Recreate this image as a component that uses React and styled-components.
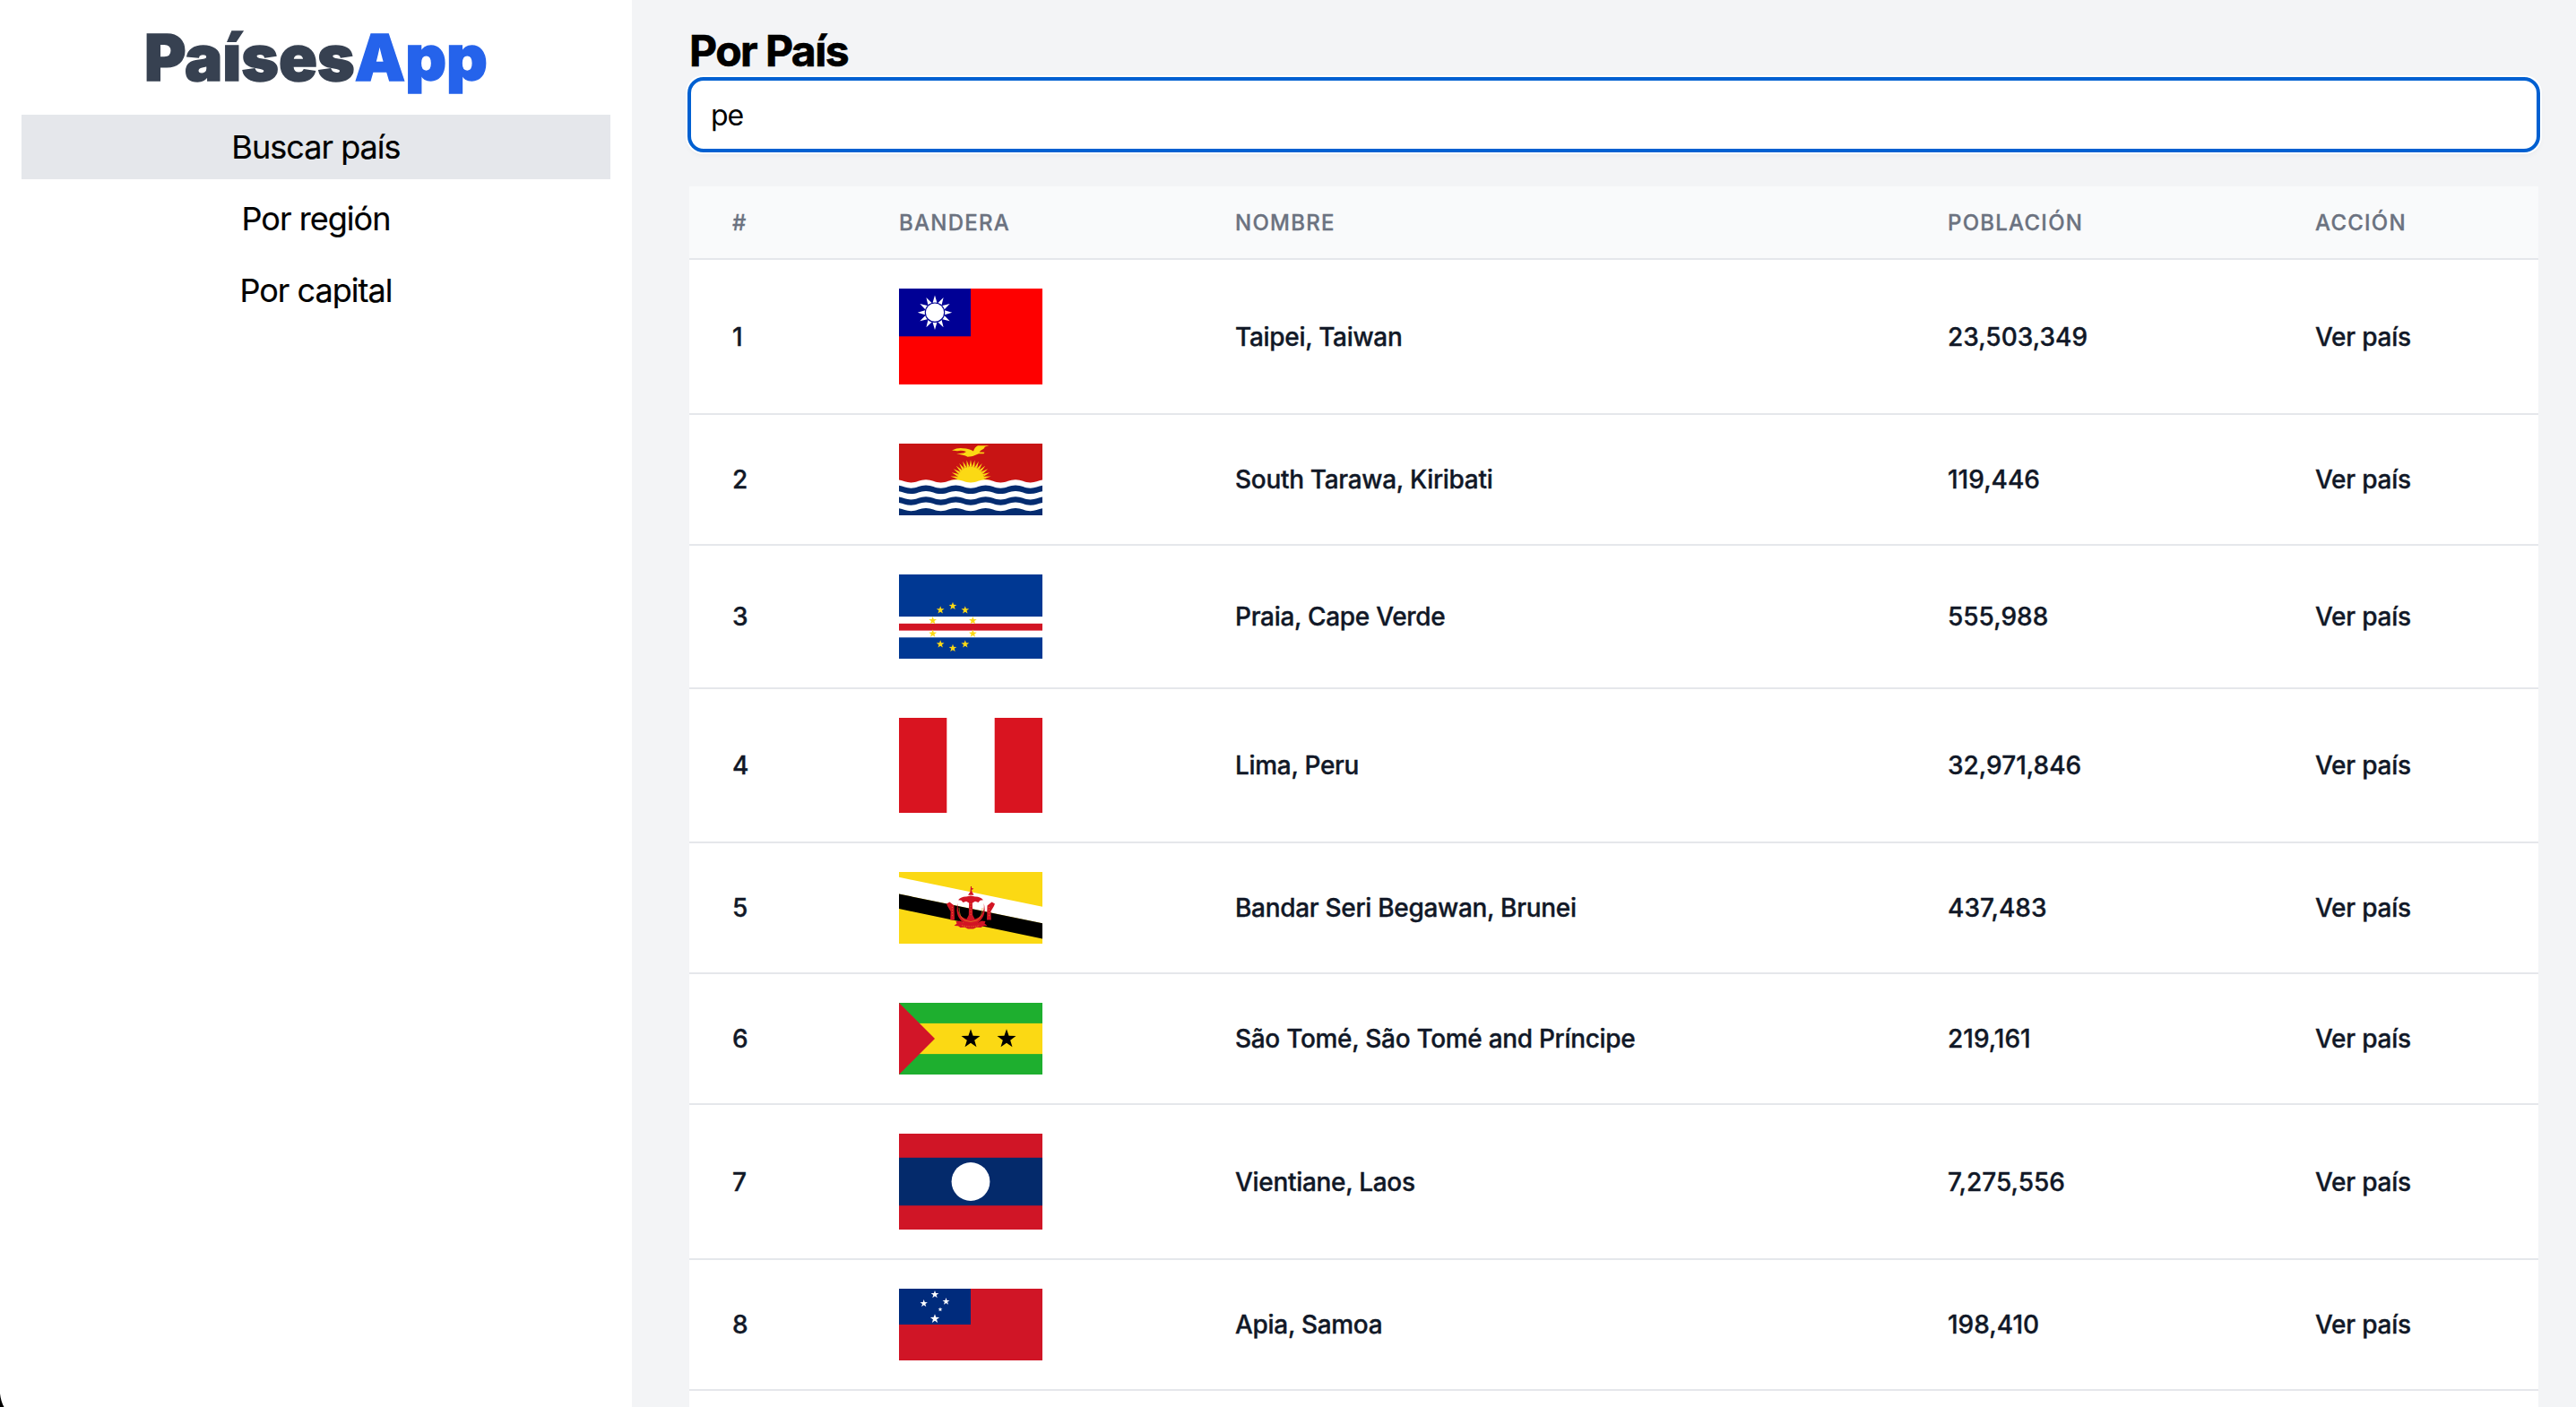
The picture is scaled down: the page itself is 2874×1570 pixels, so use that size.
import React from "react";
import styled, { createGlobalStyle } from "styled-components";

const GlobalStyle = createGlobalStyle`
  *, *::before, *::after { box-sizing: border-box; }
  body {
    margin: 0;
    overflow: hidden;
    color: #000;
    background: #f3f4f6;
    font-family: Inter, "Liberation Sans", sans-serif;
    -webkit-font-smoothing: antialiased;
  }
`;

const Page = styled.div`
  position: relative;
  display: flex;
  height: 1570px;
  overflow: hidden;
`;

const Sidebar = styled.aside`
  flex: 0 0 705px;
  padding: 24px;
  background: #fff;
  text-align: center;
`;

const Logo = styled.h1`
  margin: 0 0 16px;
  height: 88px;
  font-size: 71px;
  line-height: 80px;
  font-weight: 900;
  letter-spacing: 0;
  color: #374151;
  -webkit-text-stroke: 1.4px currentColor;
`;

const LogoAccent = styled.span`
  color: #2563eb;
`;

const Menu = styled.ul`
  display: flex;
  flex-direction: column;
  gap: 8px;
  margin: 0;
  padding: 0;
  list-style: none;
`;

const MenuItem = styled.li`
  height: 72px;
  font-size: 36px;
  line-height: 72px;
  letter-spacing: -0.027em;
  background: ${(p) => (p.$active ? "#e5e7eb" : "transparent")};
  -webkit-text-stroke: 0.2px currentColor;
`;

const Main = styled.main`
  flex: 1;
  min-width: 0;
  padding: 24px 42px 0 64px;
`;

const Title = styled.h2`
  margin: 0;
  height: 64px;
  font-size: 48px;
  line-height: 66px;
  font-weight: 700;
  letter-spacing: -0.032em;
  -webkit-text-stroke: 0.7px currentColor;
`;

const SearchInput = styled.input`
  display: block;
  width: 100%;
  height: 80px;
  margin-bottom: 40px;
  padding: 0 24px;
  border: 0;
  border-radius: 16px;
  outline: 4px solid #0060d1;
  outline-offset: -2px;
  box-shadow: 0 0 0 4px #fff, 0 3px 6px 2px rgba(0, 0, 0, 0.05);
  background: #fff;
  color: #000;
  font-family: inherit;
  font-size: 32px;
  letter-spacing: -0.035em;
`;

const Table = styled.table`
  width: 2063px;
  table-layout: fixed;
  border-spacing: 0;
  background: #fff;
`;

const Col = styled.col`
  width: ${(p) => p.$w}px;
`;

const HeadCell = styled.th`
  height: 80px;
  padding: 2px 48px 0;
  background: #f9fafb;
  color: #6b7280;
  font-size: 24px;
  line-height: 32px;
  font-weight: 500;
  letter-spacing: 0.052em;
  text-align: left;
  text-transform: uppercase;
  -webkit-text-stroke: 0.3px currentColor;
`;

const Cell = styled.td`
  padding: 32px 48px;
  border-top: 2px solid #e5e7eb;
  color: #111827;
  font-size: 28px;
  line-height: 40px;
  font-weight: 500;
  letter-spacing: ${(p) => p.$tracking || "normal"};
  white-space: nowrap;
  vertical-align: middle;
  -webkit-text-stroke: 0.35px currentColor;
`;

const FlagImage = styled.svg`
  display: block;
  width: 160px;
  height: ${(p) => p.$h}px;
`;

const WindowCorner = styled.svg`
  position: absolute;
  left: 0;
  bottom: 0;
  width: 6px;
  height: 18px;
`;

const starPoints = (cx, cy, outer, inner, n = 5) =>
  Array.from({ length: n * 2 }, (_, i) => {
    const r = i % 2 ? inner : outer;
    const a = (Math.PI * i) / n - Math.PI / 2;
    return `${(cx + r * Math.cos(a)).toFixed(2)},${(cy + r * Math.sin(a)).toFixed(2)}`;
  }).join(" ");

const Star = ({ x, y, r, fill }) => (
  <polygon points={starPoints(x, y, r, r * 0.4)} fill={fill} />
);

const Taiwan = () => (
  <>
    <rect width="160" height="107" fill="#fe0000" />
    <rect width="80" height="53.3" fill="#000095" />
    <polygon points={starPoints(40, 26.7, 19.2, 10.4, 12)} fill="#fff" />
    <circle cx="40" cy="26.7" r="11.3" fill="#000095" />
    <circle cx="40" cy="26.7" r="10.1" fill="#fff" />
  </>
);

const wave = (y) => {
  const half = 50 / 3;
  let d = `M ${80 - half * 6} ${y + 3.2}`;
  for (let i = 0; i < 12; i += 1) {
    const x = 80 + half * (i - 6);
    const from = i % 2 ? y : y + 3.2;
    const to = i % 2 ? y + 3.2 : y;
    d += ` C ${x + 6.5} ${from} ${x + half - 6.5} ${to} ${x + half} ${to}`;
  }
  return d;
};

const waveFill = (y) => `${wave(y)} L 180 90 L -20 90 Z`;

const Kiribati = () => (
  <>
    <rect width="160" height="80" fill="#c81414" />
    <polygon points={starPoints(80, 41, 23, 15, 32)} fill="#fbd914" />
    <circle cx="80" cy="41" r="15.4" fill="none" stroke="#d9861a" strokeWidth="0.7" strokeDasharray="1.5 1.5" />
    <path
      d="M59 7.4 Q66 4.4 71 5.2 Q79 5.6 83 8.4 Q84.5 3.5 88 2.2 L100.5 2.3 L96 3.6 L94.5 5.8 Q91 7.5 89.5 9.5 L95.5 9.8 L94.5 11.2 L89 11.3 Q83 14.6 76.5 14.7 Q72 12.2 64 11.5 L72.5 10.6 L75 9 Q70 6.9 65 8.2 Z"
      fill="#fbd914"
    />
    {[40.3, 46.5, 52.9, 59.2, 65.6, 72].map((y, i) => (
      <path key={y} d={waveFill(y)} fill={i % 2 ? "#042c70" : "#fff"} />
    ))}
  </>
);

const CapeVerde = () => (
  <>
    <rect width="160" height="94" fill="#003893" />
    <rect y="47" width="160" height="23.3" fill="#fff" />
    <rect y="54.8" width="160" height="7.8" fill="#d21524" />
    {Array.from({ length: 10 }, (_, i) => {
      const a = (Math.PI * i) / 5 - Math.PI / 2;
      return (
        <Star key={i} x={60 + 23.5 * Math.cos(a)} y={58.8 + 23.5 * Math.sin(a)} r={4.6} fill="#fbd914" />
      );
    })}
  </>
);

const Peru = () => (
  <>
    <rect width="160" height="106" fill="#fff" />
    <rect width="53.3" height="106" fill="#d91420" />
    <rect x="106.7" width="53.3" height="106" fill="#d91420" />
  </>
);

const Hand = () => (
  <path d="M53 35.5 L56.5 33.6 L59 35.5 L61.5 37.5 L62 53.5 L57.2 53.5 L57.6 44 L54.2 38.2 Z" />
);

const Brunei = () => (
  <>
    <rect width="160" height="80" fill="#fbd914" />
    <polygon points="0,5.8 160,38.8 160,57.2 0,24.5" fill="#fff" />
    <polygon points="0,24.5 160,57.2 160,74.5 0,41" fill="#000" />
    <g fill="#d21524">
      <path d="M80 16 L81 16 L81 17.8 L83.5 18.8 L81 20 L81.5 22 L83.5 25.8 L77 25.8 L79.5 22 Z" />
      <path d="M66 31.2 Q70 27.2 75 27.6 L80 26.5 L85 27.6 Q90 27.2 94 31.2 L90.5 31.8 L88.5 34 L85 32.8 L82 34.5 L80 35.5 L78 34.5 L75 32.8 L71.5 34 L69.5 31.8 Z" />
      <path d="M78.2 33 L81.8 33 L82.2 48 L85 53.5 L75 53.5 L77.8 48 Z" />
      <path d="M66 34.5 Q62 46 69 54 Q74 60 80 60 Q86 60 91 54 Q98 46 94.5 34.5 Q96 44 90.5 49.5 Q86 53 80 53 Q74 53 69.5 49.5 Q64.5 44 66 34.5 Z" />
      <Hand />
      <g transform="translate(160 0) scale(-1 1)">
        <Hand />
      </g>
      <path d="M61.5 60 L64.5 57.5 L63.5 55 L68 54.5 L72.5 57 L80 58.5 L87.5 57 L92 54.5 L96.5 55 L95.5 57.5 L98.5 60 L94 60.2 L91.5 62 L86.5 61.8 L83 63.6 L77 63.6 L73.5 61.8 L68.5 62 L66 60.2 Z" />
    </g>
    <g fill="none" stroke="#f0a01e" strokeWidth="0.6">
      <path d="M67 40 Q67 50 73 54 Q80 57 87 54 Q93 50 93 40" />
      <path d="M70 59.5 Q80 62.5 90 59.5" strokeDasharray="1.5 1" />
      <path d="M80 35 V50 M59.5 39 V51 M100.5 39 V51" strokeDasharray="1 2" />
    </g>
  </>
);

const SaoTome = () => (
  <>
    <rect width="160" height="80" fill="#1eaf2f" />
    <rect y="22.9" width="160" height="34.2" fill="#fbd914" />
    <polygon points="0,0 40,40 0,80" fill="#d21528" />
    <Star x={80} y={40.3} r={11} fill="#000" />
    <Star x={120} y={40.3} r={11} fill="#000" />
  </>
);

const Laos = () => (
  <>
    <rect width="160" height="107" fill="#d01526" />
    <rect y="26.8" width="160" height="53.4" fill="#042a6b" />
    <circle cx="80" cy="53.5" r="21.4" fill="#fff" />
  </>
);

const Samoa = () => (
  <>
    <rect width="160" height="80" fill="#d01526" />
    <rect width="80" height="40" fill="#002b7c" />
    <Star x={40} y={6.5} r={4.6} fill="#fff" />
    <Star x={52.5} y={14.3} r={4.2} fill="#fff" />
    <Star x={27.7} y={16.5} r={4.4} fill="#fff" />
    <Star x={46} y={23.2} r={2.6} fill="#fff" />
    <Star x={40} y={33.6} r={5.4} fill="#fff" />
  </>
);

const countries = [
  { name: "Taipei, Taiwan", population: "23,503,349", height: 107, Flag: Taiwan },
  { name: "South Tarawa, Kiribati", population: "119,446", height: 80, Flag: Kiribati },
  { name: "Praia, Cape Verde", population: "555,988", height: 94, Flag: CapeVerde },
  { name: "Lima, Peru", population: "32,971,846", height: 106, Flag: Peru },
  { name: "Bandar Seri Begawan, Brunei", population: "437,483", height: 80, Flag: Brunei },
  { name: "São Tomé, São Tomé and Príncipe", population: "219,161", height: 80, Flag: SaoTome },
  { name: "Vientiane, Laos", population: "7,275,556", height: 107, Flag: Laos },
  { name: "Apia, Samoa", population: "198,410", height: 80, Flag: Samoa },
];

const columns = [
  { label: "#", width: 186 },
  { label: "Bandera", width: 375 },
  { label: "Nombre", width: 795 },
  { label: "Población", width: 410 },
  { label: "Acción", width: 297 },
];

export default function App() {
  return (
    <>
      <GlobalStyle />
      <Page>
        <Sidebar>
          <Logo>
            Países<LogoAccent>App</LogoAccent>
          </Logo>
          <Menu>
            <MenuItem $active>Buscar país</MenuItem>
            <MenuItem>Por región</MenuItem>
            <MenuItem>Por capital</MenuItem>
          </Menu>
        </Sidebar>
        <Main>
          <Title>Por País</Title>
          <SearchInput type="text" defaultValue="pe" />
          <Table>
            <colgroup>
              {columns.map((c) => (
                <Col key={c.label} $w={c.width} />
              ))}
            </colgroup>
            <thead>
              <tr>
                {columns.map((c) => (
                  <HeadCell key={c.label}>{c.label}</HeadCell>
                ))}
              </tr>
            </thead>
            <tbody>
              {countries.map(({ name, population, height, Flag }, i) => (
                <tr key={name}>
                  <Cell>{i + 1}</Cell>
                  <Cell>
                    <FlagImage $h={height} viewBox={`0 0 160 ${height}`}>
                      <Flag />
                    </FlagImage>
                  </Cell>
                  <Cell $tracking="-0.011em">{name}</Cell>
                  <Cell>{population}</Cell>
                  <Cell $tracking="-0.008em">Ver país</Cell>
                </tr>
              ))}
              <tr>
                <Cell colSpan={5} />
              </tr>
            </tbody>
          </Table>
        </Main>
        <WindowCorner viewBox="0 0 6 18">
          <path d="M0 3 Q1 12 4.5 18 L0 18 Z" fill="#000" />
        </WindowCorner>
      </Page>
    </>
  );
}
